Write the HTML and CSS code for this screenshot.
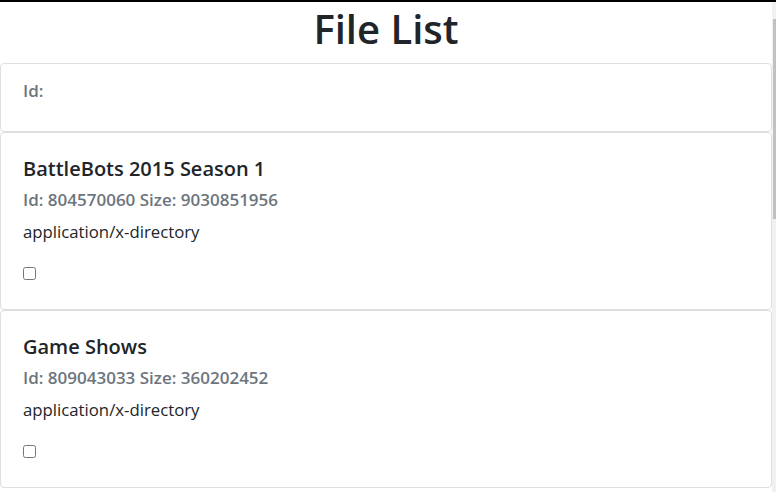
FILE: index.html
```html
<!DOCTYPE html>
<html lang="en">
<head>
<meta charset="utf-8">
<title>File List</title>
<link rel="stylesheet" href="styles.css">
</head>
<body>
<div class="page">
  <main class="main">
    <h1 class="page-title">File List</h1>
    <div class="card card-filter">
      <h6 class="card-subtitle">Id:</h6>
    </div>
    <div class="card">
      <h5 class="card-title">BattleBots 2015 Season 1</h5>
      <h6 class="card-subtitle">Id: 804570060 Size: 9030851956</h6>
      <p class="card-text">application/x-directory</p>
      <input type="checkbox" class="card-check">
    </div>
    <div class="card">
      <h5 class="card-title">Game Shows</h5>
      <h6 class="card-subtitle">Id: 809043033 Size: 360202452</h6>
      <p class="card-text">application/x-directory</p>
      <input type="checkbox" class="card-check">
    </div>
  </main>
  <div class="scrollbar"><div class="scrollbar-thumb"></div></div>
</div>
</body>
</html>
```
FILE: styles.css
```css
html, body {
  margin: 0;
  padding: 0;
  background: #ffffff;
}
body {
  border-top: 2px solid #000000;
  font-family: "Open Sans", "Noto Sans", sans-serif;
  color: #212529;
  overflow: hidden;
}
.page {
  display: flex;
  height: 490px;
  overflow: hidden;
}
.main {
  flex: 1;
  min-width: 0;
}
.scrollbar {
  width: 4px;
  background: #f1f1f1;
  flex: none;
}
.scrollbar-thumb {
  margin-top: 17px;
  margin-left: 1px;
  width: 3px;
  height: 200px;
  background: #c1c1c1;
}
.page-title {
  margin: 0 0 7px;
  padding: 0;
  text-align: center;
  font-size: 40px;
  line-height: 54px;
  font-weight: 600;
  color: #212529;
}
.card {
  border: 1px solid #dfdfdf;
  border-radius: 4px;
  padding: 24px 22px 29px;
  background: #fff;
}
.card-filter {
  padding: 17px 22px 30px;
}
.card-title {
  margin: 0;
  font-size: 20px;
  line-height: 24px;
  font-weight: 600;
  color: #212529;
}
.card-subtitle {
  margin: 0;
  font-size: 17px;
  line-height: 20px;
  font-weight: 600;
  color: #6c757d;
}
.card-title + .card-subtitle {
  margin-top: 9px;
}
.card-text {
  margin: 10px 0 0;
  font-size: 16.75px;
  line-height: 24px;
  color: #212529;
}
.card-check {
  display: block;
  margin: 23px 0 0 0;
  width: 13px;
  height: 13px;
}
```
